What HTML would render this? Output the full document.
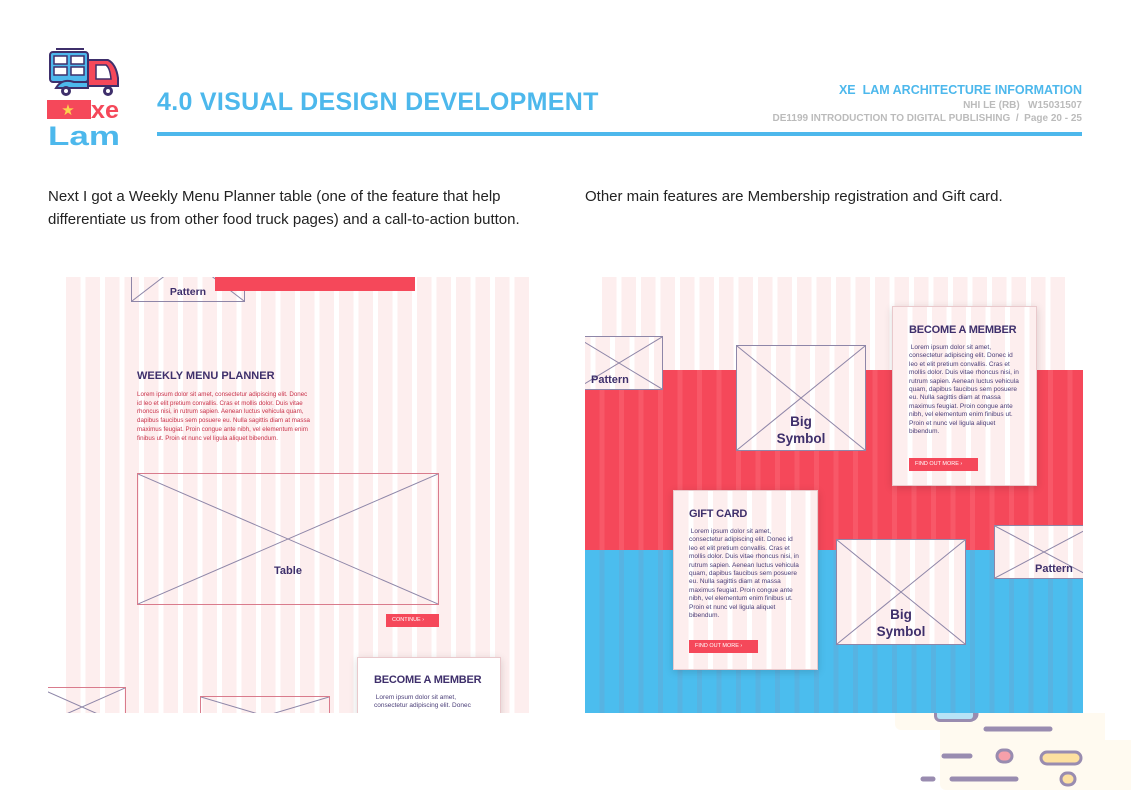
<!DOCTYPE html>
<html><head><meta charset="utf-8"><style>
*{margin:0;padding:0;box-sizing:border-box}
body{width:1131px;height:800px;background:#fff;position:relative;overflow:hidden;font-family:"Liberation Sans",sans-serif}
.a{position:absolute}
.stripes{background:repeating-linear-gradient(90deg,#fdeeee 0,#fdeeee 14.5px,#fff 14.5px,#fff 19.5px)}
.box{position:absolute;border:1px solid #8e86a8;overflow:hidden}
.box svg{position:absolute;left:0;top:0;width:100%;height:100%}
.lbl{position:absolute;width:100%;text-align:center;color:#3e2f6b;font-weight:bold}
.card{position:absolute;border:1px solid #e9c9cc;box-shadow:0 2px 8px rgba(0,0,0,.15)}
.card h4{color:#3e2f6b;font-size:11px;font-weight:bold;margin-bottom:8px;white-space:nowrap;letter-spacing:-.2px}
.card p{color:#4a3e78;font-size:6.5px;line-height:8.4px}
.btn{position:absolute;background:#f5485a;color:#fff;font-size:5.5px;padding:3px 6px;white-space:nowrap}
.body{color:#222;font-size:15px;line-height:23px}
</style></head><body>

<!-- logo -->
<svg class="a" style="left:46px;top:46px" width="76" height="102" viewBox="0 0 76 102">
<line x1="10" y1="3" x2="38" y2="3" stroke="#3e2f6b" stroke-width="2"/>
<rect x="4" y="6" width="38" height="30" rx="3" fill="#4db8ec" stroke="#3e2f6b" stroke-width="2"/>
<rect x="8" y="10" width="13" height="8" fill="#fff" stroke="#3e2f6b" stroke-width="1.5"/>
<rect x="25" y="10" width="13" height="8" fill="#fff" stroke="#3e2f6b" stroke-width="1.5"/>
<rect x="8" y="21" width="13" height="8" fill="#fff" stroke="#3e2f6b" stroke-width="1.5"/>
<rect x="25" y="21" width="13" height="8" fill="#fff" stroke="#3e2f6b" stroke-width="1.5"/>
<path d="M42 14 H62 Q70 18 72 32 V40 H42 Z" fill="#f5485a" stroke="#3e2f6b" stroke-width="2"/>
<path d="M50 19 H60 Q64 22 65 33 H50 Z" fill="#fff" stroke="#3e2f6b" stroke-width="1.5"/>
<path d="M10 42 Q16 32 28 36 L42 36 V42 Z" fill="#4db8ec" stroke="#3e2f6b" stroke-width="2"/>
<circle cx="20" cy="45" r="5" fill="#3e2f6b"/><circle cx="20" cy="45" r="2" fill="#fff"/>
<circle cx="62" cy="45" r="5" fill="#3e2f6b"/><circle cx="62" cy="45" r="2" fill="#fff"/>
<rect x="1" y="54" width="44" height="19" fill="#f5485a"/>
<text x="22" y="69" font-size="15" fill="#fcd34d" text-anchor="middle">★</text>
<text x="45" y="72" font-size="24" font-weight="bold" fill="#f5485a" font-family="Liberation Sans" textLength="28" lengthAdjust="spacingAndGlyphs">xe</text>
<text x="2" y="99" font-size="27" font-weight="bold" fill="#4db8ec" font-family="Liberation Sans" textLength="72" lengthAdjust="spacingAndGlyphs">Lam</text>
</svg>

<div class="a" style="left:157px;top:88px;color:#4db8ec;font-size:25px;font-weight:bold;letter-spacing:.3px">4.0 VISUAL DESIGN DEVELOPMENT</div>
<div class="a" style="left:157px;top:132px;width:925px;height:4px;background:#4db8ec"></div>
<div class="a" style="right:49px;top:83px;color:#4db8ec;font-size:12.5px;font-weight:bold;text-align:right">XE&nbsp; LAM ARCHITECTURE INFORMATION</div>
<div class="a" style="right:49px;top:100px;color:#bbb;font-size:10px;text-align:right;font-weight:bold">NHI LE (RB)&nbsp;&nbsp; W15031507</div>
<div class="a" style="right:49px;top:113px;color:#bbb;font-size:10px;text-align:right;font-weight:bold">DE1199 INTRODUCTION TO DIGITAL PUBLISHING&nbsp; /&nbsp; Page 20 - 25</div>

<div class="a body" style="left:48px;top:185px">Next I got a Weekly Menu Planner table (one of the feature that help<br>differentiate us from other food truck pages) and a call-to-action button.</div>
<div class="a body" style="left:585px;top:185px">Other main features are Membership registration and Gift card.</div>

<!-- left panel -->
<div class="a" style="left:48px;top:277px;width:482px;height:436px;overflow:hidden">
 <div class="a stripes" style="left:18px;top:0;width:464px;height:436px"></div>
 <div class="box" style="left:83px;top:-20px;width:114px;height:45px"><svg preserveAspectRatio="none" viewBox="0 0 100 100"><line x1="0" y1="100" x2="50" y2="0" stroke="#8e86a8" vector-effect="non-scaling-stroke"/><line x1="100" y1="100" x2="50" y2="0" stroke="#8e86a8" vector-effect="non-scaling-stroke"/></svg><div class="lbl" style="top:28px;font-size:10.5px">Pattern</div></div>
 <div class="a" style="left:167px;top:0;width:200px;height:14px;background:#f5485a"></div>
 <div class="a" style="left:89px;top:93px;color:#3e2f6b;font-weight:bold;font-size:11px">WEEKLY MENU PLANNER</div>
 <div class="a" style="left:89px;top:114px;width:175px;color:#c8324a;font-size:6.2px;line-height:8.7px">Lorem ipsum dolor sit amet, consectetur adipiscing elit. Donec id leo et elit pretium convallis. Cras et mollis dolor. Duis vitae rhoncus nisi, in rutrum sapien. Aenean luctus vehicula quam, dapibus faucibus sem posuere eu. Nulla sagittis diam at massa maximus feugiat. Proin congue ante nibh, vel elementum enim finibus ut. Proin et nunc vel ligula aliquet bibendum.</div>
 <div class="box" style="left:89px;top:196px;width:302px;height:132px;border-color:#d97b8c"><svg preserveAspectRatio="none" viewBox="0 0 100 100"><line x1="0" y1="0" x2="100" y2="100" stroke="#8e86a8" vector-effect="non-scaling-stroke"/><line x1="100" y1="0" x2="0" y2="100" stroke="#8e86a8" vector-effect="non-scaling-stroke"/></svg><div class="lbl" style="top:91px;font-size:11px">Table</div></div>
 <div class="btn" style="left:338px;top:337px;width:53px;height:13px;font-size:5.5px">CONTINUE ›</div>
 <div class="box" style="left:-10px;top:410px;width:88px;height:40px;border-color:#d97b8c"><svg preserveAspectRatio="none" viewBox="0 0 100 100"><line x1="0" y1="0" x2="100" y2="100" stroke="#8e86a8" vector-effect="non-scaling-stroke"/><line x1="100" y1="0" x2="0" y2="100" stroke="#8e86a8" vector-effect="non-scaling-stroke"/></svg></div>
 <div class="box" style="left:152px;top:419px;width:130px;height:40px;border-color:#d97b8c"><svg preserveAspectRatio="none" viewBox="0 0 100 100"><line x1="0" y1="0" x2="100" y2="100" stroke="#8e86a8" vector-effect="non-scaling-stroke"/><line x1="100" y1="0" x2="0" y2="100" stroke="#8e86a8" vector-effect="non-scaling-stroke"/></svg></div>
 <div class="card" style="left:309px;top:380px;width:144px;height:80px;background:#fff;padding:16px 16px"><h4>BECOME A MEMBER</h4><p>&nbsp;Lorem ipsum dolor sit amet,<br>consectetur adipiscing elit. Donec</p></div>
</div>

<!-- right panel -->
<div class="a" style="left:585px;top:277px;width:498px;height:436px;overflow:hidden">
 <div class="a stripes" style="left:17px;top:0;width:465px;height:100px"></div>
 <div class="a" style="left:0;top:93px;width:498px;height:180px;background:repeating-linear-gradient(90deg,#f5485a 0,#f5485a 14.5px,#f85868 14.5px,#f85868 19.5px)"></div>
 <div class="a" style="left:0;top:273px;width:498px;height:163px;background:repeating-linear-gradient(90deg,#4bbdee 0,#4bbdee 14.5px,#57b3e2 14.5px,#57b3e2 19.5px)"></div>
 <div class="box stripes" style="left:-10px;top:59px;width:88px;height:54px"><svg preserveAspectRatio="none" viewBox="0 0 100 100"><line x1="0" y1="0" x2="100" y2="100" stroke="#8e86a8" vector-effect="non-scaling-stroke"/><line x1="100" y1="0" x2="0" y2="100" stroke="#8e86a8" vector-effect="non-scaling-stroke"/></svg><div class="lbl" style="top:37px;left:15px;width:auto;font-size:11px">Pattern</div></div>
 <div class="box stripes" style="left:151px;top:68px;width:130px;height:106px"><svg preserveAspectRatio="none" viewBox="0 0 100 100"><line x1="0" y1="0" x2="100" y2="100" stroke="#8e86a8" vector-effect="non-scaling-stroke"/><line x1="100" y1="0" x2="0" y2="100" stroke="#8e86a8" vector-effect="non-scaling-stroke"/></svg><div class="lbl" style="top:67px;font-size:13.5px;line-height:17px">Big<br>Symbol</div></div>
 <div class="card stripes" style="left:307px;top:29px;width:145px;height:180px;padding:17px 16px"><h4>BECOME A MEMBER</h4><p>&nbsp;Lorem ipsum dolor sit amet, consectetur adipiscing elit. Donec id leo et elit pretium convallis. Cras et mollis dolor. Duis vitae rhoncus nisi, in rutrum sapien. Aenean luctus vehicula quam, dapibus faucibus sem posuere eu. Nulla sagittis diam at massa maximus feugiat. Proin congue ante nibh, vel elementum enim finibus ut. Proin et nunc vel ligula aliquet bibendum.</p><div class="btn" style="left:16px;top:151px;width:69px;height:13px">FIND OUT MORE ›</div></div>
 <div class="card stripes" style="left:88px;top:213px;width:145px;height:180px;padding:17px 15px"><h4>GIFT CARD</h4><p>&nbsp;Lorem ipsum dolor sit amet, consectetur adipiscing elit. Donec id leo et elit pretium convallis. Cras et mollis dolor. Duis vitae rhoncus nisi, in rutrum sapien. Aenean luctus vehicula quam, dapibus faucibus sem posuere eu. Nulla sagittis diam at massa maximus feugiat. Proin congue ante nibh, vel elementum enim finibus ut. Proin et nunc vel ligula aliquet bibendum.</p><div class="btn" style="left:15px;top:149px;width:69px;height:13px">FIND OUT MORE ›</div></div>
 <div class="box stripes" style="left:251px;top:262px;width:130px;height:106px"><svg preserveAspectRatio="none" viewBox="0 0 100 100"><line x1="0" y1="0" x2="100" y2="100" stroke="#8e86a8" vector-effect="non-scaling-stroke"/><line x1="100" y1="0" x2="0" y2="100" stroke="#8e86a8" vector-effect="non-scaling-stroke"/></svg><div class="lbl" style="top:66px;font-size:13.5px;line-height:17px">Big<br>Symbol</div></div>
 <div class="box stripes" style="left:409px;top:248px;width:100px;height:54px"><svg preserveAspectRatio="none" viewBox="0 0 100 100"><line x1="0" y1="0" x2="100" y2="100" stroke="#8e86a8" vector-effect="non-scaling-stroke"/><line x1="100" y1="0" x2="0" y2="100" stroke="#8e86a8" vector-effect="non-scaling-stroke"/></svg><div class="lbl" style="top:37px;left:40px;width:auto;font-size:11px">Pattern</div></div>
</div>

<!-- bottom right decoration -->
<svg class="a" style="left:890px;top:690px" width="241" height="110">
<rect x="5" y="5" width="205" height="35" rx="6" fill="#fffaf0"/>
<rect x="50" y="5" width="165" height="95" rx="6" fill="#fffaf0"/>
<rect x="100" y="50" width="141" height="50" fill="#fffaf0"/>
<rect x="47" y="10" width="40" height="20" rx="6" fill="#b7e3f6" stroke="#998cb0" stroke-width="3"/>
<rect x="193" y="0" width="48" height="23" fill="#fff"/>
<line x1="96" y1="39" x2="160" y2="39" stroke="#998cb0" stroke-width="5" stroke-linecap="round"/>
<line x1="54" y1="66" x2="80" y2="66" stroke="#998cb0" stroke-width="5" stroke-linecap="round"/>
<rect x="107" y="60" width="15" height="12" rx="6" fill="#f6a0aa" stroke="#998cb0" stroke-width="3"/>
<rect x="151" y="62" width="40" height="12" rx="6" fill="#fde0a0" stroke="#998cb0" stroke-width="3"/>
<line x1="33" y1="89" x2="43" y2="89" stroke="#998cb0" stroke-width="5" stroke-linecap="round"/>
<line x1="62" y1="89" x2="126" y2="89" stroke="#998cb0" stroke-width="5" stroke-linecap="round"/>
<rect x="171" y="83" width="14" height="12" rx="6" fill="#fde0a0" stroke="#998cb0" stroke-width="3"/>
</svg>
<div class="a" style="left:585px;top:690px;width:498px;height:23px;background:repeating-linear-gradient(90deg,#4bbdee 0,#4bbdee 14.5px,#57b3e2 14.5px,#57b3e2 19.5px)"></div>
<div class="a" style="left:934px;top:713px;width:42px;height:9px;border:3px solid #998cb0;border-top:none;border-radius:0 0 6px 6px;background:#b7e3f6"></div>
</body></html>
